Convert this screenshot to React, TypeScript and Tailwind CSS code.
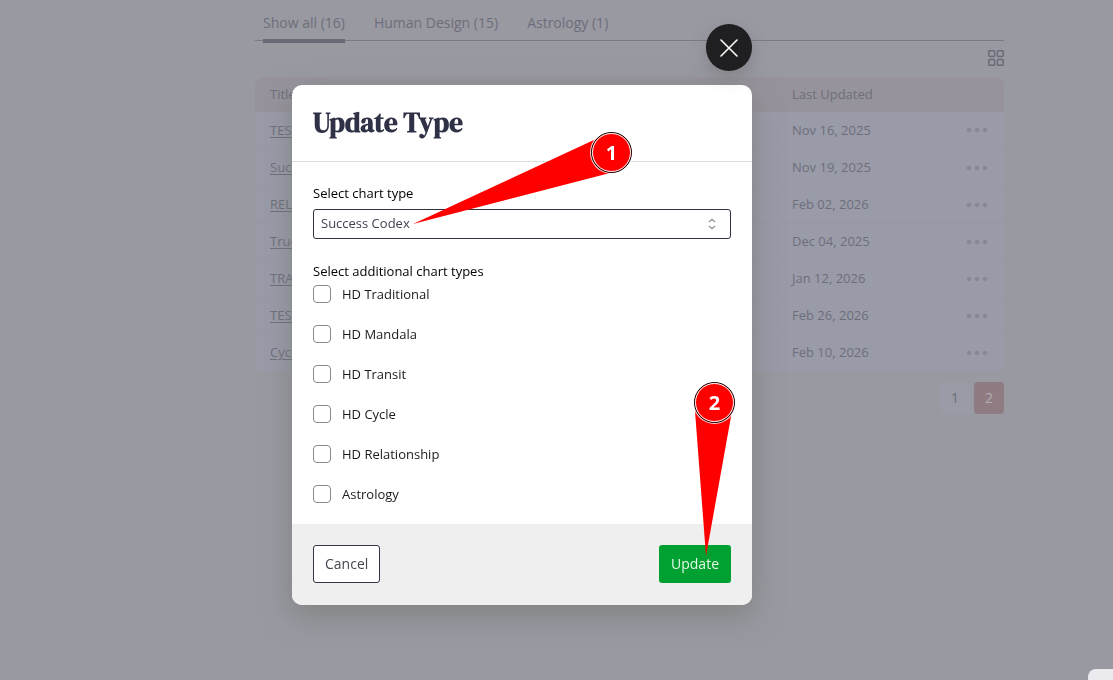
import React from "react";

const tabs = [
  { label: "Show all (16)", active: true },
  { label: "Human Design (15)", active: false },
  { label: "Astrology (1)", active: false },
];

const charts = [
  { title: "TEST", updated: "Nov 16, 2025" },
  { title: "Succe", updated: "Nov 19, 2025" },
  { title: "RELA", updated: "Feb 02, 2026" },
  { title: "True", updated: "Dec 04, 2025" },
  { title: "TRAN", updated: "Jan 12, 2026" },
  { title: "TEST", updated: "Feb 26, 2026" },
  { title: "Cycle", updated: "Feb 10, 2026" },
];

const chartTypes = [
  "HD Traditional",
  "HD Mandala",
  "HD Transit",
  "HD Cycle",
  "HD Relationship",
  "Astrology",
];

function ChartList() {
  return (
    <main className="pr-[109px] pl-[255px] text-[#6d6e7a]">
      <nav className="flex h-[41px] items-stretch gap-[29px] border-b border-[#797a86] pl-2 text-sm">
        {tabs.map((tab) => (
          <a
            key={tab.label}
            href="#"
            className={
              tab.active
                ? "-mb-[3px] border-b-4 border-[#686975] pt-3 leading-[22px] whitespace-nowrap"
                : "pt-3 leading-[22px] whitespace-nowrap"
            }
          >
            {tab.label}
          </a>
        ))}
      </nav>

      <div className="flex h-9 items-center justify-end pb-0.5">
        <button type="button" aria-label="Grid view" className="text-[#6b6b77]">
          <svg width="16" height="16" viewBox="0 0 16 16" fill="none" stroke="currentColor" strokeWidth="1.5">
            <rect x="0.8" y="0.8" width="5.8" height="5.6" rx="0.8" />
            <rect x="9.4" y="0.8" width="5.8" height="5.6" rx="0.8" />
            <rect x="0.8" y="9.4" width="5.8" height="5.8" rx="0.8" />
            <rect x="9.4" y="9.4" width="5.8" height="5.8" rx="0.8" />
          </svg>
        </button>
      </div>

      <div className="overflow-hidden rounded-lg bg-[#9a9ba9]">
        <table className="w-full table-fixed text-left text-[13px]">
          <thead className="bg-[#97939d]">
            <tr className="h-[35px]">
              <th className="pl-[15px] font-normal">Title</th>
              <th className="w-[173px] font-normal">Last Updated</th>
              <th className="w-[39px]" aria-label="Actions" />
            </tr>
          </thead>
          <tbody>
            {charts.map((chart, index) => (
              <tr key={index} className="h-[37px] border-b border-[#9798a4] last:border-b-0">
                <td className="pl-[15px]">
                  <a href="#" className="underline underline-offset-2">
                    {chart.title}
                  </a>
                </td>
                <td>{chart.updated}</td>
                <td>
                  <button type="button" aria-label="More" className="block text-[#878895]">
                    <svg width="24" height="6" viewBox="0 0 24 6" fill="currentColor">
                      <circle cx="4" cy="3" r="2.3" />
                      <circle cx="12" cy="3" r="2.3" />
                      <circle cx="20" cy="3" r="2.3" />
                    </svg>
                  </button>
                </td>
              </tr>
            ))}
          </tbody>
        </table>
      </div>

      <div className="mt-[11px] flex justify-end gap-1 text-sm">
        <button type="button" className="h-8 w-[30px] rounded bg-[#9a9ba7]">
          1
        </button>
        <button type="button" className="h-8 w-[30px] rounded bg-[#917b82] text-[#b3adb5]">
          2
        </button>
      </div>
    </main>
  );
}

function Callouts() {
  return (
    <>
      <svg
        className="pointer-events-none absolute top-0 left-0"
        width="460"
        height="520"
        viewBox="0 0 460 520"
        fill="#ff0000"
        aria-hidden="true"
      >
        <path d="M121 139 L304 54 L318 88 Z" />
        <path d="M414 471 L403 326 L440 326 Z" />
      </svg>
      <span className="absolute top-[47px] left-[299px] flex size-[41px] items-center justify-center rounded-full border border-black bg-[#ff0000] text-xl font-bold text-white ring-1 ring-white/80 outline-1 -outline-offset-2 outline-white">
        1
      </span>
      <span className="absolute top-[297px] left-[402px] flex size-[41px] items-center justify-center rounded-full border border-black bg-[#ff0000] text-xl font-bold text-white ring-1 ring-white/80 outline-1 -outline-offset-2 outline-white">
        2
      </span>
    </>
  );
}

function UpdateTypeDialog() {
  return (
    <div className="fixed inset-0 flex items-start justify-center pt-[85px] pr-[69px]">
      <form
        role="dialog"
        aria-labelledby="dialog-title"
        className="relative w-[460px] rounded-[10px] bg-white shadow-[0_10px_30px_rgba(110,115,105,0.6)]"
      >
        <button
          type="button"
          aria-label="Close"
          className="absolute -top-[61px] right-0 flex h-[47px] w-[46px] items-center justify-center rounded-full bg-[#1f1f21] text-white shadow-[0_6px_16px_rgba(100,100,100,0.4)]"
        >
          <svg width="18" height="18" viewBox="0 0 18 18" fill="none" stroke="currentColor" strokeWidth="1.6" strokeLinecap="round">
            <path d="M1 1 L17 17 M17 1 L1 17" />
          </svg>
        </button>

        <header className="flex h-[77px] items-center border-b border-[#dcdede] px-[21px]">
          <h2
            id="dialog-title"
            className="font-['DM_Serif_Display','Liberation_Serif',serif] text-[27px] font-bold text-[#2f3147]"
          >
            Update Type
          </h2>
        </header>

        <div className="px-[21px] pt-[21px] pb-5 text-[13px] leading-5 text-black">
          <label htmlFor="chart-type" className="block">
            Select chart type
          </label>
          <div className="relative mt-[6px]">
            <select
              id="chart-type"
              className="block h-[30px] w-full appearance-none rounded-[3px] border border-[#2f3040] bg-white px-[7px] pb-0.5 text-[#3f4152]"
            >
              <option>Success Codex</option>
            </select>
            <svg
              className="pointer-events-none absolute top-[9px] right-[14px] text-[#8b8c96]"
              width="10"
              height="12"
              viewBox="0 0 10 12"
              fill="none"
              stroke="currentColor"
              strokeWidth="1.2"
            >
              <path d="M2 4 L5 1.2 L8 4 M2 8 L5 10.8 L8 8" />
            </svg>
          </div>

          <fieldset className="mt-[22px]">
            <legend>Select additional chart types</legend>
            <div className="mt-[3px] flex flex-col gap-5">
              {chartTypes.map((type) => (
                <label key={type} className="flex items-center gap-[11px] text-[#1b1b1f]">
                  <input
                    type="checkbox"
                    className="size-[18px] appearance-none rounded-[4px] border border-[#8a8a8e] bg-white"
                  />
                  {type}
                </label>
              ))}
            </div>
          </fieldset>
        </div>

        <footer className="flex items-center justify-between rounded-b-[10px] bg-[#efefef] px-[21px] pt-[21px] pb-[22px] text-sm">
          <button type="button" className="h-[38px] rounded-[3px] border border-[#33344a] bg-white px-[11px] text-[#44464f]">
            Cancel
          </button>
          <button type="submit" className="h-[38px] rounded-[3px] bg-[#00a031] px-3 font-medium text-[#e3f8e5]">
            Update
          </button>
        </footer>

        <Callouts />
      </form>
    </div>
  );
}

export default function App() {
  return (
    <div className="min-h-screen bg-[#9999a2] font-['Open_Sans','Noto_Sans',sans-serif]">
      <ChartList />
      <UpdateTypeDialog />
      <div className="fixed right-0 bottom-0 h-[11px] w-[25px] rounded-tl-lg bg-[#ebebef]" />
    </div>
  );
}
